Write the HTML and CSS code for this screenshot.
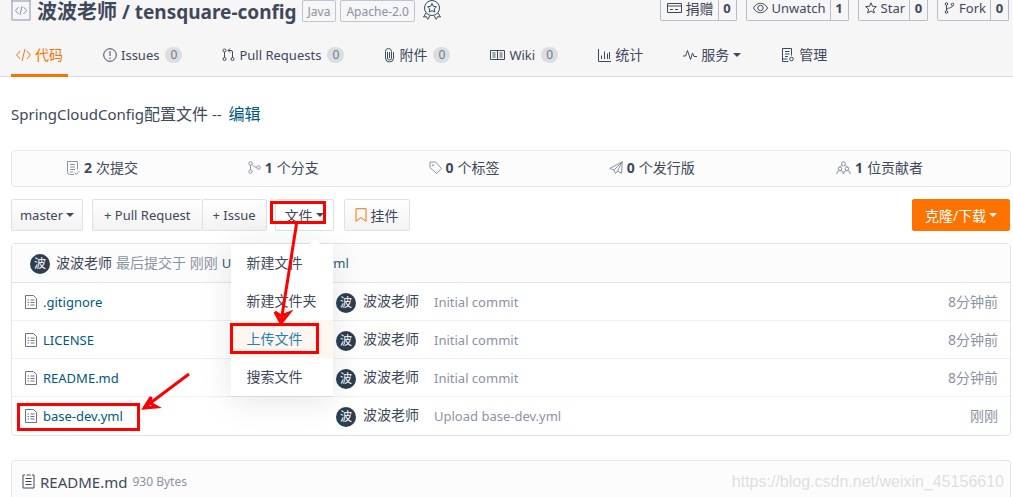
FILE: index.html
```html
<!DOCTYPE html>
<html lang="zh-CN">
<head>
  <meta charset="UTF-8">
  <meta name="viewport" content="width=device-width, initial-scale=1.0">
  <title>波波老师 / tensquare-config</title>
  <link rel="stylesheet" href="styles.css">
</head>
<body>

  <!-- icons used more than once -->
  <svg class="defs" width="0" height="0">
    <symbol id="icon-file" viewBox="0 0 12 14">
      <path d="M.5.5h8l3 3v10H.5zM2.5 5h1.500M5.500 5h4M2.500 7.500H4M5.500 7.500h4M2.500 10H4M5.500 10h4"/>
    </symbol>
  </svg>

  <header class="header">
    <div class="title-row">
      <svg class="icon code-box" width="20" height="21" viewBox="0 0 20 21"><path d="M1 0v20h18V0M1 1h18M7.500 7 4.500 10.500l3 3.500M12.500 7l3 3.500-3 3.500M11 6l-2 9"/></svg>
      <h1><span>波波老师</span> / tensquare-config</h1>
      <a class="label" href="#">Java</a>
      <a class="label" href="#">Apache-2.0</a>
      <svg class="icon medal" width="20" height="20" viewBox="0 0 20 20"><circle cx="10" cy="8" r="7.500"/><path d="m10 3.500 1.400 2.900 3.100.4-2.300 2.200.6 3.100L10 10.600l-2.800 1.500.6-3.100-2.300-2.200 3.100-.4zM4 13l-2.500 4 3-.3 1.300 2.600L8 15.500M16 13l2.500 4-3-.3-1.300 2.600L12 15.500"/></svg>
      <div class="actions">
        <div class="action">
          <button type="button"><svg class="icon" width="15" height="12" viewBox="0 0 15 12"><path d="M.5 1.500h14v9H.5zM.5 4h14M3 7.500h3M8 7.500h3"/></svg><span class="cn">捐赠</span></button>
          <a href="#">0</a>
        </div>
        <div class="action">
          <button type="button"><svg class="icon" width="15" height="12" viewBox="0 0 15 12"><path d="M.5 6C3.500-.3 11.500-.3 14.500 6 11.500 12.300 3.500 12.300.5 6z"/><circle cx="7.500" cy="6" r="2.700"/></svg>Unwatch</button>
          <a href="#">1</a>
        </div>
        <div class="action">
          <button type="button"><svg class="icon" width="12" height="12" viewBox="0 0 12 12"><path d="m6 .8 1.500 3.500 3.900.3-3 2.600.9 3.800L6 9l-3.300 2 .9-3.800-3-2.600 3.900-.3z"/></svg>Star</button>
          <a href="#">0</a>
        </div>
        <div class="action">
          <button type="button"><svg class="icon" width="11" height="12" viewBox="0 0 11 12"><circle cx="2.500" cy="2" r="1.300"/><circle cx="8.500" cy="2.500" r="1.300"/><circle cx="2.500" cy="10" r="1.300"/><path d="M2.500 3.300v5.400M8.500 3.800c0 2.500-5.500 1.700-6 4"/></svg>Fork</button>
          <a href="#">0</a>
        </div>
      </div>
    </div>

    <nav class="tabs">
      <a class="tab active" href="#"><svg class="icon" width="15" height="14" viewBox="0 0 15 14"><path d="M4 3 .7 7 4 11M11 3l3.300 4-3.300 4M9 1 6 13"/></svg><span class="cn">代码</span></a>
      <a class="tab" href="#"><svg class="icon" width="14" height="14" viewBox="0 0 14 14"><circle cx="7" cy="7" r="6.300"/><path d="M7 3v5M7 9.500V11"/></svg>Issues<span class="badge">0</span></a>
      <a class="tab" href="#"><svg class="icon" width="13" height="14" viewBox="0 0 13 14"><circle cx="2.500" cy="2.500" r="1.500"/><circle cx="2.500" cy="11" r="1.500"/><circle cx="10.500" cy="11" r="1.500"/><path d="M2.500 4v5.500M10.500 9.500V4q0-1.500-1.500-1.500H6M8 .5l-2 2 2 2"/></svg>Pull Requests<span class="badge">0</span></a>
      <a class="tab" href="#"><svg class="icon" width="11" height="15" viewBox="0 0 11 15"><path d="M3.500 4v6a2 2 0 0 0 4 0V3.500a3 3 0 0 0-6 0V10a4 4 0 0 0 8 0V4M5.500 4v6"/></svg><span class="cn">附件</span><span class="badge">0</span></a>
      <a class="tab" href="#"><svg class="icon" width="15" height="12" viewBox="0 0 15 12"><path d="M.5 1.500h14v9H.5zM7.500 1.500v9M2.500 4h3M2.500 6h3M2.500 8h3M9.500 4h3M9.500 6h3M9.500 8h3"/></svg>Wiki<span class="badge">0</span></a>
      <a class="tab" href="#"><svg class="icon" width="13" height="13" viewBox="0 0 13 13"><path d="M.5 0v12.500H13M3.500 10V6.500M6.500 10V2.500M9.500 10V4.500M11.500 10V3"/></svg><span class="cn">统计</span></a>
      <a class="tab" href="#"><svg class="icon" width="14" height="12" viewBox="0 0 14 12"><path d="M0 7h2.500L4.500 1.500l3 9L9.500 4l1.500 3.500h3"/></svg><span class="cn">服务</span><i class="caret"></i></a>
      <a class="tab" href="#"><svg class="icon" width="14" height="14" viewBox="0 0 14 14"><path d="M7.500 13.500h-6V.5h9v7M1.500 11h5M4 3.500h4.500M4 6h4.500M4 8.500h3"/><circle cx="10.500" cy="11" r="1.800"/></svg><span class="cn">管理</span></a>
    </nav>
  </header>

  <main class="container">
    <p class="desc">SpringCloudConfig<span>配置文件</span> -- <a href="#">编辑</a></p>

    <div class="summary">
      <a href="#"><svg class="icon" width="13" height="14" viewBox="0 0 13 14"><path d="M7 13.500H3.500Q.5 13.500.5 11.500V.5h10v8M3 3.500h5M3 6h5M3 8.500h5M3 11h3M7.500 11.500l1.700 2 3.300-3.500"/></svg><b>2</b> 次提交</a>
      <a href="#"><svg class="icon" width="13" height="13" viewBox="0 0 13 13"><circle cx="2.500" cy="2.500" r="1.700"/><circle cx="2.500" cy="10.500" r="1.700"/><circle cx="10.500" cy="6.500" r="1.700"/><path d="M2.500 4.200v4.600M4 3.300q2 3 4.800 3.200"/></svg><b>1</b> 个分支</a>
      <a href="#"><svg class="icon" width="13" height="13" viewBox="0 0 13 13"><path d="M1 1h5.500l6 6.500-5 5L1 6.500z"/><circle cx="4" cy="4.300" r=".6"/></svg><b>0</b> 个标签</a>
      <a href="#"><svg class="icon" width="14" height="13" viewBox="0 0 14 13"><path d="M.7 7.500 13.300.7l-.8 11.500-4-2.200-2 2.500L5 9zM5 9l8.300-8.300L8.500 10"/></svg><b>0</b> 个发行版</a>
      <a href="#"><svg class="icon" width="15" height="14" viewBox="0 0 15 14"><circle cx="7.500" cy="2.800" r="2"/><circle cx="4" cy="7.700" r="1.800"/><circle cx="11" cy="7.700" r="1.800"/><path d="M.7 13q0-3.500 3.300-3.500T7.500 13q0-3.500 3.500-3.500t3.300 3.500M5.500 4.500 3.500 6M9.500 4.500l2 1.500"/></svg><b>1</b> 位贡献者</a>
    </div>

    <div class="toolbar">
      <button class="btn branch" type="button">master<i class="caret"></i></button>
      <div class="btn-group">
        <button class="btn" type="button">+ Pull Request</button>
        <button class="btn" type="button">+ Issue</button>
      </div>
      <div class="dropdown">
        <button class="btn open cn" type="button">文件<i class="caret"></i></button>
        <div class="menu">
          <a href="#">新建文件</a>
          <a href="#">新建文件夹</a>
          <a class="hover" href="#">上传文件</a>
          <a href="#">搜索文件</a>
        </div>
      </div>
      <button class="btn widget cn" type="button"><svg class="icon" width="12" height="14" viewBox="0 0 12 14"><path d="M1 .7h10v12.600L6 9.500l-5 3.800z"/></svg>挂件</button>
      <button class="btn clone cn" type="button">克隆/下载<i class="caret"></i></button>
    </div>

    <section class="files">
      <div class="last-commit">
        <span class="avatar">波</span>
        <a class="author" href="#">波波老师</a>
        <span class="muted">最后提交于 刚刚</span>
        <a class="message" href="#">Upload base-dev.yml</a>
      </div>
      <table>
        <tr>
          <td class="name"><svg class="icon" width="12" height="14"><use href="#icon-file"/></svg><a href="#">.gitignore</a></td>
          <td class="user"><span class="avatar">波</span><a href="#">波波老师</a></td>
          <td class="commit">Initial commit</td>
          <td class="time">8分钟前</td>
        </tr>
        <tr>
          <td class="name"><svg class="icon" width="12" height="14"><use href="#icon-file"/></svg><a href="#">LICENSE</a></td>
          <td class="user"><span class="avatar">波</span><a href="#">波波老师</a></td>
          <td class="commit">Initial commit</td>
          <td class="time">8分钟前</td>
        </tr>
        <tr>
          <td class="name"><svg class="icon" width="12" height="14"><use href="#icon-file"/></svg><a href="#">README.md</a></td>
          <td class="user"><span class="avatar">波</span><a href="#">波波老师</a></td>
          <td class="commit">Initial commit</td>
          <td class="time">8分钟前</td>
        </tr>
        <tr>
          <td class="name"><svg class="icon" width="12" height="14"><use href="#icon-file"/></svg><a href="#">base-dev.yml</a></td>
          <td class="user"><span class="avatar">波</span><a href="#">波波老师</a></td>
          <td class="commit">Upload base-dev.yml</td>
          <td class="time">刚刚</td>
        </tr>
      </table>
    </section>

    <section class="readme">
      <svg class="icon" width="13" height="15" viewBox="0 0 13 15"><path d="M3 1H1v13h11V1h-2M4.500 1h4M3.500 4.500h6M3.500 7.500h6M3.500 10.500h6"/></svg>
      <span class="readme-name">README.md</span>
      <span class="size">930 Bytes</span>
      <span class="watermark">https://blog.csdn.net/weixin_45156610</span>
    </section>
  </main>

  <!-- red tutorial marks over the page -->
  <svg class="marks" width="1013" height="497" viewBox="0 0 1013 497">
    <rect x="271.500" y="202.500" width="53" height="20"/>
    <rect x="231.500" y="324.500" width="86" height="28"/>
    <rect x="18.500" y="404.500" width="120" height="25"/>
    <path d="M296.500 224 281 322M275 312l6 11 8-10-8 3z"/>
    <path d="M189 374 145 407M151 397l-7 11 13-1-7-4z"/>
  </svg>

</body>
</html>
```

FILE: styles.css
```css
* {
  box-sizing: border-box;
}

body {
  margin: 0;
  font-family: "Noto Sans", "Noto Sans CJK SC", sans-serif;
  font-size: 13px;
  line-height: 20px;
  color: #40485b;
  background-color: #fff;
}

a {
  color: inherit;
  text-decoration: none;
}

button {
  font-family: inherit;
  font-size: 13px;
  color: inherit;
  cursor: pointer;
}

.cn {
  font-size: 14px;
}

.icon {
  flex: none;
  fill: none;
  stroke: currentColor;
  stroke-width: 1;
}

.defs {
  position: absolute;
}

.caret {
  flex: none;
  width: 0;
  margin-left: 3px;
  border: 4px solid transparent;
  border-top-color: currentColor;
  border-bottom: 0;
}

/* header */
.header {
  padding: 0 4px 0 11px;
  background-color: #f6f6f6;
  border-bottom: 1px solid #dcdcdc;
}

.title-row {
  display: flex;
  align-items: flex-start;
  height: 35px;
}

.code-box {
  color: #8c92a4;
}

h1 {
  margin: 0 5px 0 6px;
  font-size: 19px;
  line-height: 24px;
  font-weight: bold;
  white-space: nowrap;
}

h1 span {
  font-size: 20px;
}

.label {
  height: 22px;
  margin-right: 4px;
  padding: 0 5px;
  font-size: 12px;
  line-height: 22px;
  color: #8c92a4;
  border: 1px solid #c0c4d0;
  border-radius: 2px;
}

.medal {
  margin-left: 3px;
}

.actions {
  display: flex;
  gap: 9px;
  margin-left: auto;
}

.action {
  display: flex;
  height: 21px;
  border: 1px solid #b9bdcb;
  border-top: 0;
  border-radius: 0 0 2px 2px;
}

.action button {
  display: flex;
  align-items: center;
  gap: 4px;
  padding: 0 4px 4px 6px;
  border: 0;
  background: none;
}

.action a {
  width: 18px;
  line-height: 16px;
  font-weight: bold;
  text-align: center;
  border-left: 1px solid #b9bdcb;
}

.tabs {
  display: flex;
  gap: 30px;
  margin-bottom: -1px;
}

.tab {
  display: flex;
  align-items: center;
  gap: 4px;
  height: 42px;
  padding: 1px 5px 0;
  border-bottom: 3px solid transparent;
  white-space: nowrap;
}

.tab.active {
  color: #fe7300;
  border-bottom-color: #fe7300;
}

.tab .caret {
  margin-left: 0;
}

.badge {
  width: 17px;
  height: 16px;
  margin-left: 2px;
  font-size: 12px;
  line-height: 16px;
  text-align: center;
  color: #6f7a94;
  background-color: #dcdde0;
  border-radius: 8px;
}

/* content */
.container {
  padding: 0 2px 0 11px;
}

.desc {
  margin: 0;
  padding: 25px 0 23px;
  font-size: 15px;
  line-height: 25px;
}

.desc span,
.desc a {
  font-size: 16px;
}

.desc a {
  margin-left: 3px;
  color: #005980;
}

.summary {
  display: grid;
  grid-template-columns: 181fr 181fr 181fr 195fr 261fr;
  height: 37px;
  padding-bottom: 2px;
  background-color: #fcfcfc;
  border: 1px solid #e3e9ed;
  border-radius: 4px;
}

.summary a {
  display: flex;
  align-items: center;
  justify-content: center;
  gap: 4px;
  font-size: 14px;
}

.summary .icon {
  color: #8c92a4;
}

.toolbar {
  display: flex;
  padding: 12px 1px 12px 0;
}

.btn {
  display: flex;
  align-items: center;
  justify-content: center;
  height: 32px;
  padding: 0 10px;
  white-space: nowrap;
  background: linear-gradient(#fff, #f2f2f2);
  border: 1px solid #dce3e8;
  border-radius: 2px;
}

.btn.cn {
  font-size: 14px;
}

.branch {
  width: 72px;
}

.btn-group {
  display: flex;
  margin: 0 8px 0 9px;
}

.btn-group .btn:first-child {
  padding: 0 11px;
  border-right: 0;
}

.dropdown {
  position: relative;
}

.btn.open {
  width: 59px;
  background: #fff;
}

.menu {
  position: absolute;
  top: 45px;
  right: 1px;
  z-index: 1;
  width: 102px;
  background-color: #fff;
  border-bottom: 1px solid #d8dadf;
  box-shadow: 0 4px 30px rgba(0, 0, 0, 0.1);
}

.menu::before {
  content: "";
  position: absolute;
  top: -5px;
  right: 13px;
  border: 5px solid transparent;
  border-top: 0;
  border-bottom-color: #fff;
}

.menu a {
  display: block;
  padding: 0 16px;
  font-size: 14px;
  line-height: 38px;
  white-space: nowrap;
}

.menu a.hover {
  color: #1c84b8;
  background-color: #fff6f0;
}

.widget {
  gap: 4px;
  margin-left: 10px;
}

.widget .icon {
  color: #fe7300;
}

.btn.clone {
  width: 98px;
  margin-left: auto;
  color: #fff;
  background: #fe7300;
  border-color: #fe7300;
}

.files {
  border: 1px solid #dfe6eb;
  border-radius: 4px;
}

.last-commit {
  display: flex;
  align-items: center;
  gap: 4px;
  height: 38px;
  padding-left: 18px;
  background-color: #fcfcfc;
  font-size: 14px;
}

.author {
  margin-left: 2px;
}

.muted {
  color: #8c92a4;
}

.message {
  font-size: 13px;
  color: #2c5a78;
}

.avatar {
  display: inline-block;
  flex: none;
  width: 20px;
  height: 20px;
  margin-top: 2px;
  font-size: 12px;
  line-height: 20px;
  text-align: center;
  color: #fff;
  background-color: #2c3e50;
  border-radius: 50%;
}

table {
  width: 100%;
  border-collapse: collapse;
  table-layout: fixed;
}

td {
  height: 38px;
  padding: 0;
  border-top: 1px solid #eef1f4;
}

tr:first-child td {
  border-top-color: #dfe6eb;
}

.name {
  width: 324px;
  padding-left: 13px;
  color: #005980;
}

.name .icon {
  margin-right: 6px;
  vertical-align: -2px;
  color: #6b7389;
}

.user {
  width: 98px;
  font-size: 14px;
}

.user .avatar {
  margin: 2px 7px 0 0;
  vertical-align: -1px;
}

.commit {
  color: #8c92a4;
}

.time {
  width: 120px;
  padding-right: 12px;
  font-size: 14px;
  text-align: right;
  color: #8c92a4;
}

.readme {
  display: flex;
  align-items: center;
  gap: 5px;
  height: 37px;
  margin-top: 24px;
  padding: 6px 6px 0 10px;
  background-color: #fcfcfc;
  border: 1px solid #e3e9ed;
  border-bottom: 0;
  border-radius: 4px 4px 0 0;
}

.readme-name {
  font-size: 15px;
}

.size {
  font-size: 12px;
  color: #8c92a4;
}

.watermark {
  margin-left: auto;
  font-family: "Liberation Sans", Arial, sans-serif;
  font-size: 16px;
  color: #dfdfdf;
}

.marks {
  position: absolute;
  top: 0;
  left: 0;
  z-index: 2;
  fill: none;
  stroke: #f00;
  stroke-width: 3;
  pointer-events: none;
}
```
